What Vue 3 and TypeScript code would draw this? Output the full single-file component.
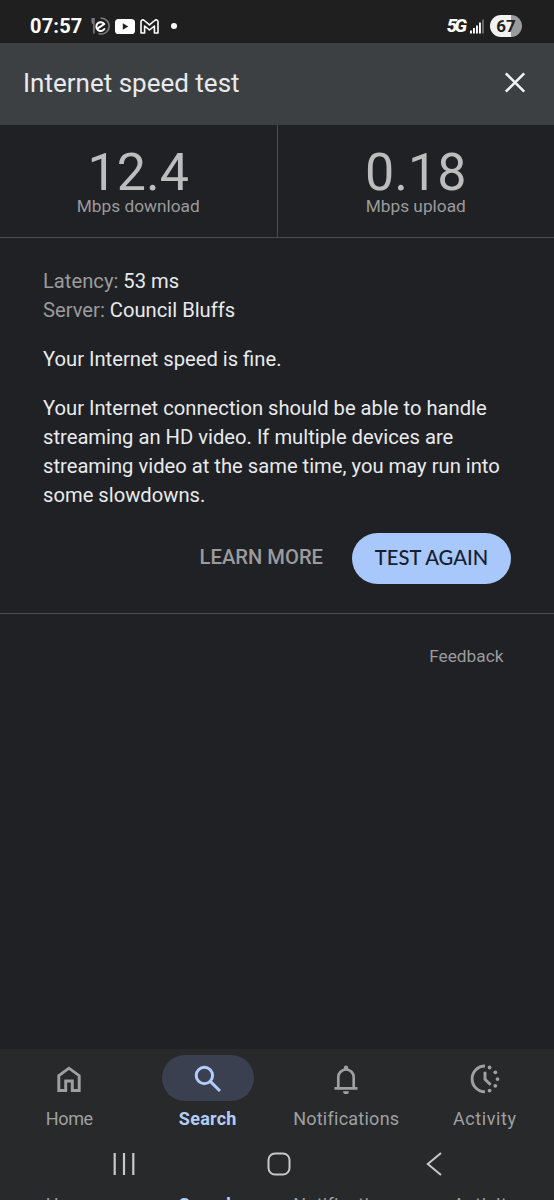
<script setup lang="ts">
interface Reading { value: string; label: string }
interface Tab { id: string; label: string; active?: boolean }

const readings: Reading[] = [
  { value: '12.4', label: 'Mbps download' },
  { value: '0.18', label: 'Mbps upload' },
]
const message: string[] = [
  'Your Internet connection should be able to handle',
  'streaming an HD video. If multiple devices are',
  'streaming video at the same time, you may run into',
  'some slowdowns.',
]
const tabs: Tab[] = [
  { id: 'home', label: 'Home' },
  { id: 'search', label: 'Search', active: true },
  { id: 'bell', label: 'Notifications' },
  { id: 'activity', label: 'Activity' },
]
const bars: number[] = [3, 5.5, 8, 11, 14]
</script>

<template>
  <div class="screen">
    <div class="status">
      <span class="time">07:57</span>
      <svg class="s-food" width="20" height="20" viewBox="0 0 20 20" fill="none">
        <path d="M1.300 2v4q0 1.600 1.400 1.600M2.900 2v15.500" stroke="#777" stroke-width="1.700" />
        <path d="M9.500 2.200a7.900 7.900 0 1 1-2 15.300" stroke="#777" stroke-width="1.600" />
        <circle cx="10" cy="10" r="6.300" fill="#1f1f1f" />
        <path d="M7.500 11.900 13.300 8A4.400 4.400 0 1 0 13.400 13" stroke="#fff" stroke-width="2" stroke-linecap="round" stroke-linejoin="round" />
      </svg>
      <svg class="s-video" width="20" height="15" viewBox="0 0 20 15">
        <rect width="20" height="15" rx="3.600" fill="#fff" /><path d="M7.800 4.300v6.400l5.500-3.200z" fill="#1f1f1f" />
      </svg>
      <svg class="s-mail" width="19" height="15" viewBox="0 0 19 15" fill="none" stroke="#fff" stroke-width="1.600" stroke-linejoin="round">
        <path d="M1 2.800C1 1 3 .4 4.300 1.500L9.500 5.800l5.200-4.300C16 .4 18 1 18 2.800V14h-3.600V7l-4.900 4L4.600 7v7H1z" />
      </svg>
      <span class="dot"></span>
      <span class="gap"></span>
      <span class="net">5G</span>
      <svg class="s-signal" width="15" height="15" viewBox="0 0 15 15">
        <rect v-for="(h, i) in bars" :key="i" :x="i * 3" :y="14.500 - h" width="1.900" :height="h" :fill="i === 4 ? '#6c6c6c' : '#fff'" />
      </svg>
      <span class="battery">67</span>
    </div>

    <header class="head">
      <h1>Internet speed test</h1>
      <svg width="22" height="22" viewBox="0 0 22 22" fill="none" stroke="#f1f3f4" stroke-width="2.600"><path d="M1.800 1.300l18.400 18.400M20.200 1.300 1.800 19.700" /></svg>
    </header>

    <section class="readings">
      <div v-for="r in readings" :key="r.label" class="reading">
        <div class="value">{{ r.value }}</div>
        <div class="unit">{{ r.label }}</div>
      </div>
    </section>

    <section class="details">
      <div class="line server"><span>Latency:</span> 53 ms</div>
      <div class="line server"><span>Server:</span> Council Bluffs</div>
      <p class="line fine">Your Internet speed is fine.</p>
      <p class="message"><span v-for="m in message" :key="m" class="line">{{ m }}</span></p>
      <div class="actions">
        <button class="learn">LEARN MORE</button>
        <button class="again">TEST AGAIN</button>
      </div>
    </section>

    <div class="feedback">Feedback</div>

    <footer class="bottom">
      <nav class="tabs">
        <div v-for="t in tabs" :key="t.id" class="tab" :class="[t.id, { active: t.active }]">
          <div class="pill">
            <svg v-if="t.id === 'home'" width="32" height="32" viewBox="0 0 32 32" fill="none" stroke="currentColor" stroke-width="2.900">
              <path d="M5.800 12.700 16 5.200l10.200 7.500v14.800H19.300v-9.500h-6.600v9.500H5.800z" />
            </svg>
            <svg v-else-if="t.id === 'search'" width="32" height="32" viewBox="0 0 32 32" fill="none" stroke="currentColor" stroke-width="3">
              <circle cx="12.400" cy="12.500" r="8.200" /><path d="M18.300 18.400 28 28" />
            </svg>
            <svg v-else-if="t.id === 'bell'" width="32" height="32" viewBox="0 0 32 32" fill="none" stroke="currentColor" stroke-width="2.700">
              <path d="M4.500 25.300h23M8.300 25V14.200a7.700 7.700 0 0 1 15.400 0V25" />
              <path d="M13.800 7V4.800a2.200 2.200 0 0 1 4.400 0V7zM13.100 28.200h5.800a2.900 2.900 0 0 1-5.800 0z" fill="currentColor" stroke="none" />
            </svg>
            <svg v-else width="32" height="32" viewBox="0 0 32 32" fill="none" stroke="currentColor" stroke-width="2.900">
              <path d="M16 3a12.900 12.900 0 0 0 0 25.800" /><path d="M16 8.800v7.600l5.600 5.400" />
              <g fill="currentColor" stroke="none"><circle cx="20.600" cy="4.500" r="1.900" /><circle cx="26.300" cy="9.300" r="1.900" /><circle cx="28.500" cy="16.100" r="1.900" /><circle cx="26.300" cy="22.800" r="1.900" /><circle cx="20.600" cy="27.600" r="1.900" /></g>
            </svg>
          </div>
          <div class="tab-label">{{ t.label }}</div>
        </div>
      </nav>
      <div class="system">
        <svg width="24" height="24" viewBox="0 0 24 24" stroke="#c8c8c8" stroke-width="2.200"><path d="M2.700 1v22M12 1v22M21.300 1v22" /></svg>
        <svg width="24" height="24" viewBox="0 0 24 24" fill="none" stroke="#c8c8c8" stroke-width="2"><rect x="1.500" y="1.500" width="21" height="21" rx="6.500" /></svg>
        <svg width="24" height="24" viewBox="0 0 24 24" fill="none" stroke="#c8c8c8" stroke-width="2"><path d="M19 1 5.800 12 19 23" /></svg>
      </div>
      <div class="echo">
        <div v-for="t in tabs" :key="t.id" class="tab-label" :class="[t.id, { active: t.active }]">{{ t.label }}</div>
      </div>
    </footer>
  </div>
</template>

<style>
html, body { margin: 0; background: #202124; }
</style>

<style scoped>
* { box-sizing: border-box; }
.screen { width: 554px; height: 1200px; overflow: hidden; display: flex; flex-direction: column; background: #202124; color: #e8eaed; font-family: Roboto, "Liberation Sans", sans-serif; }
svg { display: block; flex: none; }
.status { height: 43px; flex: none; display: flex; align-items: center; padding: 9px 32px 0 30px; background: #1f1f1f; color: #fff; }
.time { width: 53px; font-size: 20px; font-weight: 700; letter-spacing: 0.2px; line-height: 24px; white-space: nowrap; }
.s-food { margin-left: 8px; }
.s-video { margin-left: 4px; }
.s-mail { margin-left: 5px; }
.dot { width: 6px; height: 6px; margin-left: 12px; border-radius: 50%; background: #fff; }
.gap { flex: 1; }
.net { font-size: 19px; font-weight: 800; font-style: italic; line-height: 24px; letter-spacing: -3px; margin-right: 6px; }
.s-signal { margin-right: 5px; }
.battery { width: 32px; height: 22px; border-radius: 11px; background: linear-gradient(to right, #f2f2f2 67%, #9b9b9b 67%); color: #1f1f1f; font-size: 17px; font-weight: 700; line-height: 23px; text-align: center; }
.head { height: 82px; flex: none; display: flex; align-items: center; justify-content: space-between; padding: 0 28px 3px 23px; background: #3c4043; }
.head h1 { margin: 0; font-size: 26px; font-weight: 400; line-height: 32px; }
.readings { height: 113px; flex: none; display: flex; border-bottom: 1px solid #4b4e51; }
.reading { flex: 1; padding-top: 22px; text-align: center; }
.reading + .reading { border-left: 1px solid #4b4e51; }
.value { font-size: 52px; line-height: 52px; color: #bdbdbf; }
.unit { font-size: 17.300px; line-height: 18px; margin-top: -2px; color: #9a9b9d; }
.details { height: 376px; flex: none; padding: 29px 43px 0 43px; border-bottom: 1px solid #4b4e51; }
.line { display: block; font-size: 20.200px; line-height: 28.800px; white-space: nowrap; }
.server span { color: #9a9b9d; }
p { margin: 0; }
.fine { margin-top: 20.300px; }
.message { margin-top: 20.500px; }
.actions { display: flex; justify-content: flex-end; margin-top: 24px; }
button { border: 0; font-family: inherit; padding: 0; height: 51px; white-space: nowrap; }
.learn { background: none; color: #9a9b9d; font-size: 20.200px; font-weight: 500; margin-right: 29px; padding-bottom: 3px; }
.again { width: 159px; border-radius: 26px; background: #a8c7fa; color: #14212f; font-family: Lato, Roboto, sans-serif; font-size: 20.200px; font-weight: 500; padding-bottom: 4px; }
.feedback { margin: 31px 50.500px 0 0; text-align: right; font-size: 17.300px; line-height: 22px; color: #9a9b9d; }
.bottom { height: 151px; flex: none; margin-top: auto; background: #28292b; overflow: hidden; }
.tabs, .echo { display: grid; grid-template-columns: repeat(4, 1fr); }
.tabs { padding-top: 6px; height: 87px; }
.tab { display: flex; flex-direction: column; align-items: center; color: #9fa0a2; }
.pill { width: 92px; height: 46px; padding-top: 1px; border-radius: 23px; display: flex; align-items: center; justify-content: center; }
.tab.active .pill { background: #3b4051; }
.tab-label { font-size: 18px; line-height: 22px; margin-top: 7px; letter-spacing: 0.250px; text-align: center; }
.home .tab-label, .tab-label.home { letter-spacing: -0.300px; }
.activity .tab-label, .tab-label.activity { letter-spacing: 0.600px; }
.active { color: #b3cdfb; }
.active .tab-label, .tab-label.active { font-weight: 700; }
.system { height: 57px; display: flex; justify-content: space-between; align-items: center; padding: 0 108px 2px 112px; }
.echo { color: #9fa0a2; margin-top: 1px; }
.echo .tab-label { margin-top: 0; }
</style>
